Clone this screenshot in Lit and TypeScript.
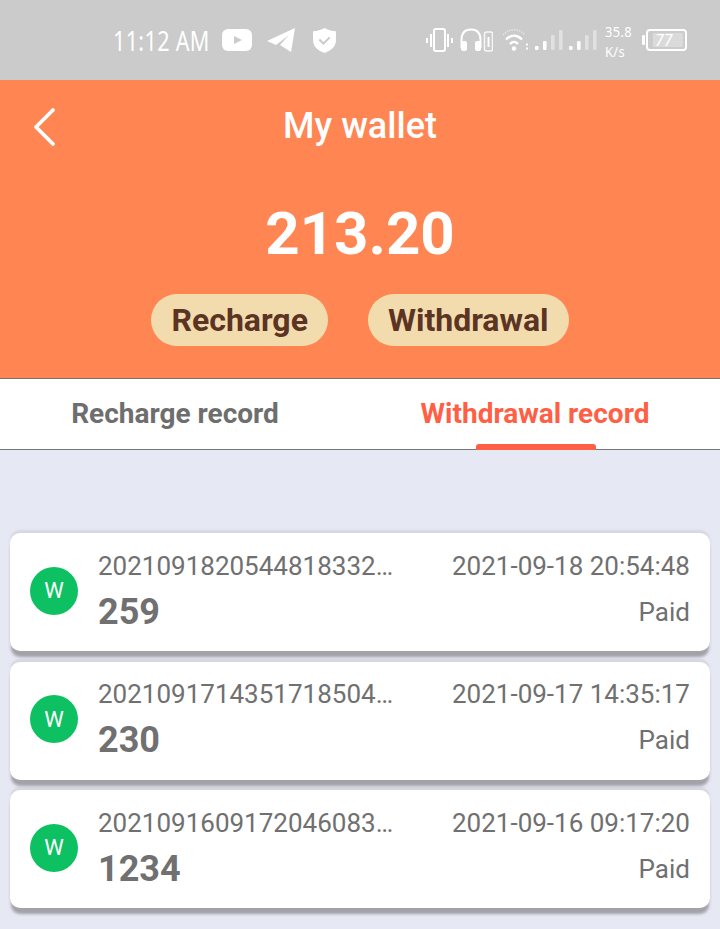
import { LitElement, html, css, svg } from "lit";
import { customElement } from "lit/decorators.js";

const records = [
  { id: "2021091820544818332…", amount: "259", time: "2021-09-18 20:54:48" },
  { id: "2021091714351718504…", amount: "230", time: "2021-09-17 14:35:17" },
  { id: "2021091609172046083…", amount: "1234", time: "2021-09-16 09:17:20" },
];

const barHeights = [4, 9, 15, 20];

const bars = () => svg`
  <svg width="28" height="24" viewBox="0 0 28 24">
    ${barHeights.map((h, i) => svg`<rect x="${i * 8}" y="${22 - h}" width="3.6" height="${h}" rx="1.2" fill="#fff" opacity="${i < 2 ? 1 : 0.42}"/>`)}
  </svg>`;

@customElement("app-root")
export class AppRoot extends LitElement {
  static styles = css`
    :host { display: block; width: 720px; height: 929px; overflow: hidden; background: #e6e8f4; font-family: Roboto, "Liberation Sans", sans-serif; }
    .status { height: 80px; background: #cbcbcb; display: flex; align-items: center; padding: 0 33px 0 113px; box-sizing: border-box; color: #fff; }
    .clock { width: 97px; flex: none; white-space: nowrap; font: 400 27px/1 "Noto Sans", sans-serif; letter-spacing: 0.4px; transform: scaleX(0.8); transform-origin: left center; }
    .left-icons { display: flex; align-items: center; margin-left: 12px; }
    .yt { margin-right: 15px; }
    .tg { margin-right: 17px; }
    .right-icons { display: flex; align-items: center; margin-left: auto; }
    .vib { margin-right: 7px; }
    .hp { margin-right: 9px; }
    .wifi { margin-right: 7px; }
    .sig1 { margin-right: 6px; }
    .sig2 { margin-right: 8px; }
    .speed { width: 32px; margin-right: 5px; margin-top: 1px; white-space: nowrap; font: 400 15px/20px "Noto Sans", sans-serif; letter-spacing: 0.4px; transform: scaleX(0.86); transform-origin: left center; }
    svg { display: block; flex: none; }

    .head { height: 299px; box-sizing: border-box; background: #ff8552; border-bottom: 1px solid #77706c; color: #fff; display: flex; flex-direction: column; align-items: center; }
    .nav { width: 100%; height: 92px; display: flex; align-items: center; justify-content: center; position: relative; font-size: 36px; font-weight: 500; }
    .back { position: absolute; left: 32px; top: 27px; }
    .balance { margin-top: 29px; font-size: 60px; line-height: 66px; font-weight: 700; }
    .actions { display: flex; gap: 40px; margin-top: 27px; }
    .pill { height: 52px; line-height: 52px; padding: 0 20px; border-radius: 26px; background: #f2dcae; color: #5c3423; font-size: 32px; font-weight: 700; }

    .tabs { height: 71px; box-sizing: border-box; background: #fff; border-bottom: 1px solid #77787c; display: flex; }
    .tab { flex: 1; box-sizing: border-box; display: flex; align-items: flex-start; justify-content: center; padding: 19px 10px 0 0; font-size: 28px; line-height: 32px; font-weight: 700; color: #6e6e6e; position: relative; }
    .tab.on { color: #ff5f45; }
    .tab.on::after { content: ""; position: absolute; left: 116px; bottom: -1px; width: 120px; height: 6px; background: #ff5f45; border-radius: 3px 3px 0 0; }

    .list { padding: 83px 10px 0; display: flex; flex-direction: column; gap: 10.5px; }
    .card { height: 118px; box-sizing: border-box; background: #fff; border-radius: 10px; display: flex; align-items: center; padding: 0 20px 3px; color: #707070; box-shadow: 0 -3px 2px rgba(150,150,150,.2), 0 7px 3px -1px rgba(120,120,120,.62); }
    .avatar { width: 48px; height: 48px; border-radius: 50%; background: #0dc162; color: #fff; display: flex; align-items: center; justify-content: center; font-size: 22px; flex: none; margin-right: 20px; }
    .body { flex: 1; min-width: 0; display: grid; grid-template-columns: 295px 1fr; row-gap: 10px; align-items: center; }
    .id { font-size: 26px; line-height: 32px; white-space: nowrap; }
    .time { font-size: 26px; line-height: 32px; text-align: right; white-space: nowrap; }
    .amount { font-size: 36px; line-height: 40px; font-weight: 700; }
    .paid { font-size: 26px; line-height: 40px; text-align: right; }
  `;

  render() {
    return html`
      <div class="status">
        <span class="clock">11:12 AM</span>
        <div class="left-icons">
          <svg class="yt" width="30" height="22" viewBox="0 0 30 22"><rect width="30" height="22" rx="6" fill="#fff"/><path d="M12 7l8 4-8 4z" fill="#cbcbcb"/></svg>
          <svg class="tg" width="28" height="24" viewBox="0 0 28 24"><path d="M0 13L28 0l-4 24-11-7 9-10-13 10z" fill="#fff"/></svg>
          <svg width="25" height="27" viewBox="0 0 24 26"><path d="M12 1c3 2 7 3 11 3v9c0 6-5 10-11 12C6 23 1 19 1 13V4c4 0 8-1 11-3z" fill="#fff"/><path d="M7 12l4 4 6-6" fill="none" stroke="#cbcbcb" stroke-width="2"/></svg>
        </div>
        <div class="right-icons">
          <svg class="vib" width="27" height="24" viewBox="0 0 27 24" fill="none" stroke="#fff" stroke-width="2"><rect x="8" y="1" width="11" height="22" rx="2"/><path d="M1 10v5M5 6v13M22 6v13M26 10v5"/></svg>
          <svg class="hp" width="33" height="24" viewBox="0 0 33 24" fill="none" stroke="#fff" stroke-width="2"><path d="M1.500 20v-8C1.500 5 5 1.500 11 1.500S20.500 5 20.500 12v8"/><rect x="1" y="13" width="6" height="10" rx="2" fill="#fff" stroke="none"/><rect x="15" y="13" width="6" height="10" rx="2" fill="#fff" stroke="none"/><rect x="24.500" y="4" width="8" height="19" rx="2" stroke-width="1.500" opacity=".85"/><path d="M28.500 9v10" stroke-width="2"/></svg>
          <svg class="wifi" width="26" height="24" viewBox="0 0 26 24" fill="none" stroke="#fff"><path d="M1 7C7 0 17 0 23 7" stroke-width="1.300" opacity=".55" stroke-dasharray="1.500 1"/><path d="M4 11.500c5-5 11-5 16 0M8 16c3-3 5-3 8 0" stroke-width="2.400"/><circle cx="12" cy="20.500" r="2.200" fill="#fff" stroke="none"/><path d="M25 15.500v2M25 19.500v2" stroke-width="2"/></svg>
          <span class="sig1">${bars()}</span>
          <span class="sig2">${bars()}</span>
          <div class="speed">35.8<br />K/s</div>
          <svg width="45" height="22" viewBox="0 0 45 22" fill="none"><rect y="6" width="3" height="10" rx="1" fill="#fff"/><rect x="5" y="1" width="39" height="20" rx="3" stroke="#fff" stroke-width="2"/><rect x="11" y="4" width="30" height="14" fill="#fff" opacity=".3"/><text x="13" y="17" font-size="16" font-style="italic" font-family="Noto Sans" fill="#fff">77</text></svg>
        </div>
      </div>

      <div class="head">
        <div class="nav">
          <svg class="back" width="26" height="40" viewBox="0 0 26 40" fill="none" stroke="#fff" stroke-width="3.800" stroke-linecap="round" stroke-linejoin="round"><path d="M21 3L4 20l17 17"/></svg>
          My wallet
        </div>
        <div class="balance">213.20</div>
        <div class="actions">
          <div class="pill">Recharge</div>
          <div class="pill">Withdrawal</div>
        </div>
      </div>

      <div class="tabs">
        <div class="tab">Recharge record</div>
        <div class="tab on">Withdrawal record</div>
      </div>

      <div class="list">
        ${records.map((r) => html`
          <div class="card">
            <div class="avatar">W</div>
            <div class="body">
              <div class="id">${r.id}</div>
              <div class="time">${r.time}</div>
              <div class="amount">${r.amount}</div>
              <div class="paid">Paid</div>
            </div>
          </div>
        `)}
      </div>
    `;
  }
}
